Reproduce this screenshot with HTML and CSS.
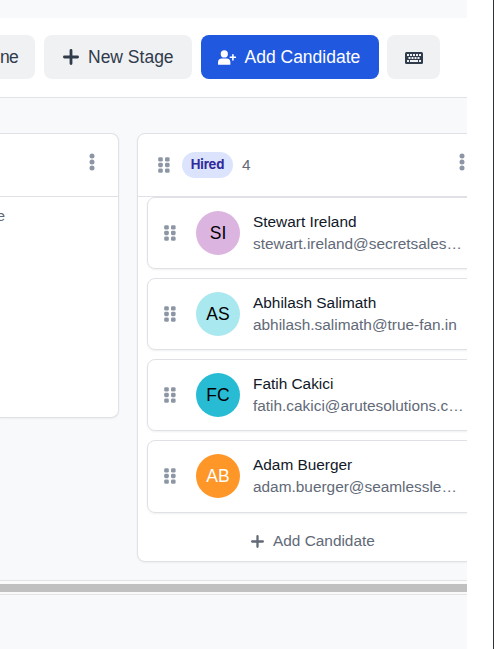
FILE: index.html
```html
<!DOCTYPE html>
<html lang="en">
<head>
<meta charset="utf-8">
<title>Hiring board</title>
<link rel="stylesheet" href="styles.css">
</head>
<body>
<svg class="defs" aria-hidden="true">
  <symbol id="grip" viewBox="0 0 12 16"><rect x="0.2" y="0.2" width="4.6" height="4.4" rx="1.4"/><rect x="7" y="0.2" width="4.6" height="4.4" rx="1.4"/><rect x="0.2" y="5.8" width="4.6" height="4.4" rx="1.4"/><rect x="7" y="5.8" width="4.6" height="4.4" rx="1.4"/><rect x="0.2" y="11.4" width="4.6" height="4.4" rx="1.4"/><rect x="7" y="11.4" width="4.6" height="4.4" rx="1.4"/></symbol>
  <symbol id="dots" viewBox="0 0 6 18"><circle cx="3" cy="3" r="2.5"/><circle cx="3" cy="9" r="2.5"/><circle cx="3" cy="15" r="2.5"/></symbol>
  <symbol id="plus" viewBox="0 0 16 16"><path d="M8 1.4V14.6M1.4 8H14.6" fill="none" stroke="currentColor" stroke-width="2.8" stroke-linecap="round"/></symbol>
</svg>
<div class="app">
  <div class="strip"></div>
  <header class="toolbar">
    <button class="btn cut">ne</button>
    <button class="btn stage"><svg class="plus"><use href="#plus"/></svg>New Stage</button>
    <button class="btn primary"><svg class="user" viewBox="0 0 18 15"><circle cx="6.3" cy="3.9" r="3.6"/><path d="M0 14.2V12.5A4 4 0 0 1 4 8.5H8.4A4 4 0 0 1 12.4 12.5V14.2Q12.4 14.8 11.7 14.8H.7Q0 14.8 0 14.2Z"/><path d="M14.9 4.7V9.9M12.3 7.3H17.4" fill="none" stroke="currentColor" stroke-width="1.6" stroke-linecap="round"/></svg>Add Candidate</button>
    <button class="btn keys" aria-label="Keyboard"><svg class="keyboard" viewBox="0 0 18 12"><rect width="18" height="12" rx="1.5"/><path d="M2 3H4M5 3H7M8 3H10M11 3H13M14 3H16M3.5 6H5.5M6.5 6H8.5M9.5 6H11.5M12.5 6H14.5M2 9H4M5 9H13M14 9H16" stroke="#f0f1f3" stroke-width="1.8"/></svg></button>
  </header>
  <main class="board">
    <section class="column previous">
      <div class="column-head"><svg class="dots"><use href="#dots"/></svg></div>
      <p class="note">e</p>
    </section>
    <section class="column hired">
      <div class="column-head"><svg class="grip"><use href="#grip"/></svg><span class="tag">Hired</span><span class="count">4</span><svg class="dots"><use href="#dots"/></svg></div>
      <div class="cards">
        <article class="card"><svg class="grip"><use href="#grip"/></svg><div class="avatar plum">SI</div><div class="who"><div class="name">Stewart Ireland</div><div class="mail">stewart.ireland@secretsales…</div></div></article>
        <article class="card"><svg class="grip"><use href="#grip"/></svg><div class="avatar aqua">AS</div><div class="who"><div class="name">Abhilash Salimath</div><div class="mail">abhilash.salimath@true-fan.in</div></div></article>
        <article class="card"><svg class="grip"><use href="#grip"/></svg><div class="avatar teal">FC</div><div class="who"><div class="name">Fatih Cakici</div><div class="mail">fatih.cakici@arutesolutions.c…</div></div></article>
        <article class="card last"><svg class="grip"><use href="#grip"/></svg><div class="avatar orange">AB</div><div class="who"><div class="name">Adam Buerger</div><div class="mail">adam.buerger@seamlessle…</div></div></article>
      </div>
      <div class="add"><svg class="plus"><use href="#plus"/></svg>Add Candidate</div>
    </section>
  </main>
  <div class="scrollbar"><div class="thumb"></div></div>
</div>
</body>
</html>
```
FILE: styles.css
```css
* { box-sizing: border-box; }
body { margin: 0; width: 494px; height: 649px; overflow: hidden; background: #fff; border-right: 1px solid #303136; font-family: "Liberation Sans", Arial, sans-serif; }
svg { fill: currentColor; flex: none; display: block; }
.defs { display: none; }
.app { width: 467px; height: 649px; overflow: hidden; background: #f8f9fb; }
.strip { height: 18px; }
.toolbar { height: 80px; padding-top: 17px; display: flex; align-items: flex-start; background: #fff; border-bottom: 1px solid #dfe2e6; }
.btn { height: 44px; flex: none; display: flex; align-items: center; padding: 0; border: 0; border-radius: 8px; background: #f0f1f3; color: #303b4b; font: 17.5px "Liberation Sans", Arial, sans-serif; white-space: nowrap; }
.cut { width: 35px; margin-right: 9px; padding-right: 17px; justify-content: flex-end; border-radius: 0 8px 8px 0; letter-spacing: -0.7px; }
.stage { width: 148px; margin-right: 9px; padding-left: 19px; gap: 9px; }
.stage .plus { width: 16px; height: 16px; }
.primary { width: 178px; margin-right: 8px; padding-left: 17px; gap: 8.5px; background: #2158e0; color: #fff; }
.user { width: 18px; height: 15px; }
.keys { width: 53px; justify-content: center; }
.keyboard { width: 18px; height: 12px; margin-top: 2px; }
.board { height: 482px; padding-top: 35px; display: flex; align-items: flex-start; gap: 18px; }
.column { flex: none; background: #fff; border: 1px solid #dfe1e6; border-radius: 8px; box-shadow: 0 1px 2px rgba(30, 40, 60, .05); }
.column-head { height: 63px; display: flex; align-items: center; border-bottom: 1px solid #dfe1e6; color: #8d96a4; }
.previous { width: 119px; height: 285px; border-left: 0; border-radius: 0 8px 8px 0; }
.previous .column-head { padding-left: 89px; }
.note { margin: 10px 0 0; width: 5px; display: flex; justify-content: flex-end; font-size: 15.4px; line-height: 18px; color: #626977; }
.dots { width: 6px; height: 18px; margin-bottom: 7px; }
.grip { width: 12px; height: 16px; color: #8d96a4; }
.hired { width: 400px; height: 429px; }
.hired .column-head { padding-left: 20px; }
.hired .dots { margin-left: 208px; }
.tag { width: 51px; height: 26px; margin-left: 12px; border-radius: 13px; background: #dce4fd; color: #32299a; font: 700 13px/25px Inter, sans-serif; letter-spacing: -0.1px; text-align: center; }
.count { width: 9px; margin-left: 9px; font-size: 15.4px; color: #626977; }
.cards { padding-left: 9px; display: flex; flex-direction: column; gap: 9px; }
.card { width: 380px; height: 72px; padding-left: 16px; display: flex; align-items: center; border: 1px solid #dfe1e6; border-radius: 8px; box-shadow: 0 1px 2px rgba(30, 40, 60, .07); }
.card.last { height: 73px; padding-bottom: 1px; }
.avatar { width: 44px; height: 44px; margin: 0 13px 0 20px; border-radius: 50%; font-size: 17.5px; line-height: 45px; text-align: center; color: #000; }
.plum { background: #dcb4e0; }
.aqua { background: #a9e8ef; }
.teal { background: #28bcd4; }
.orange { background: #fe9628; color: #fff; }
.who { font-size: 15.4px; line-height: 22px; white-space: nowrap; }
.name { color: #111827; }
.mail { color: #626977; }
.add { height: 48px; margin-top: 4px; padding-left: 113px; display: flex; align-items: center; gap: 9px; font-size: 15.4px; color: #626977; }
.add .plus { width: 13px; height: 13px; }
.scrollbar { height: 15px; padding: 3px 0 2px; border: solid #e3e4e6; border-width: 1px 0; background: #fafafa; }
.thumb { height: 8px; background: #c0c0c0; }
```
